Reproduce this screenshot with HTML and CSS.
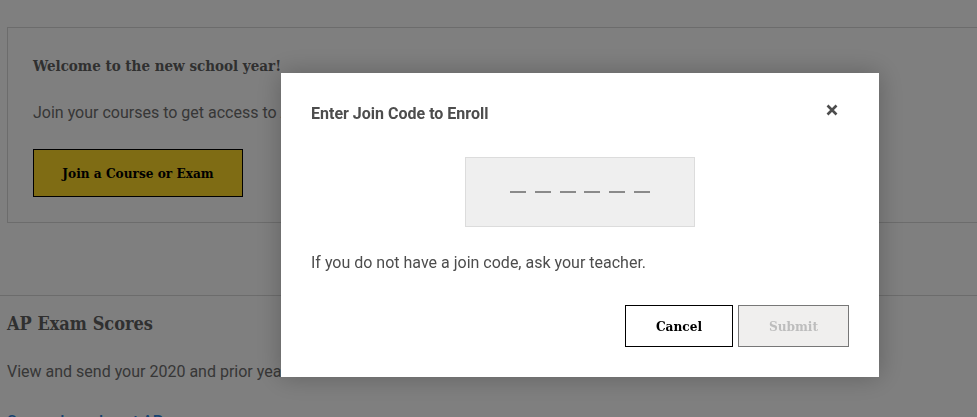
FILE: index.html
```html
<!DOCTYPE html>
<html lang="en">
<head>
  <meta charset="UTF-8" />
  <meta name="viewport" content="width=device-width, initial-scale=1.0"/>
  <title>My AP</title>
  <link rel="stylesheet" href="styles.css">
</head>
<body>
  <div class="page">
    <div class="welcome">
      <h3>Welcome to the new school year!</h3>
      <p>Join your courses to get access to AP Classroom resources and register for AP Exams.</p>
      <button class="btn-yellow">Join a Course or Exam</button>
    </div>

    <div class="scores">
      <h2>AP Exam Scores</h2>
      <p>View and send your 2020 and prior years' AP Exam scores.</p>
      <a href="#" class="link">See and send past AP exam scores &gt;</a>
    </div>
  </div>

  <div class="overlay"></div>

  <div class="modal">
    <div class="modal-head">
      <h4>Enter Join Code to Enroll</h4>
      <button class="close" aria-label="Close">
        <svg width="12" height="12" viewBox="0 0 12 12"><path d="M1.5 1.5 L10.5 10.5 M10.5 1.5 L1.5 10.5" stroke="#4d4d4d" stroke-width="2.6"/></svg>
      </button>
    </div>
    <div class="code-box">
      <span class="dash"></span><span class="dash"></span><span class="dash"></span><span class="dash"></span><span class="dash"></span><span class="dash"></span>
    </div>
    <p class="hint">If you do not have a join code, ask your teacher.</p>
    <div class="actions">
      <button class="btn-cancel">Cancel</button>
      <button class="btn-submit" disabled>Submit</button>
    </div>
  </div>
</body>
</html>
```

FILE: styles.css
```css
body { margin: 0; font-family: Roboto, Arial, sans-serif; color: #6e6e6e; background: #fff; overflow: hidden; height: 417px; }
.page { padding-top: 27px; }

.welcome { margin-left: 7px; margin-right: -20px; border: 1px solid #d9d9d9; padding: 27px 25px 0; height: 196px; box-sizing: border-box; }
.welcome h3 { margin: 0; font-family: "DejaVu Serif Condensed", "DejaVu Serif", serif; font-size: 15px; font-weight: bold; color: #606060; line-height: 22px; }
.welcome p { margin: 25px 0 0; font-size: 16px; line-height: 22px; white-space: nowrap; }
.btn-yellow { display: block; margin-top: 25px; width: 210px; height: 48px; background: #fed828; border: 1px solid #000; font-family: "DejaVu Serif Condensed", "DejaVu Serif", serif; font-weight: bold; font-size: 13.5px; color: #000; }

.scores { margin-top: 72px; border-top: 1px solid #d9d9d9; padding: 15px 7px 0; }
.scores h2 { margin: 0; font-family: "DejaVu Serif Condensed", "DejaVu Serif", serif; font-size: 18px; font-weight: bold; line-height: 26px; color: #606060; }
.scores p { margin: 24px 0 0; font-size: 16px; line-height: 22px; white-space: nowrap; }
.link { display: inline-block; margin-top: 29px; color: #2f86e0; font-size: 16px; font-weight: 500; text-decoration: underline; }

.overlay { position: fixed; inset: 0; background: rgba(0, 0, 0, 0.5); }

.modal { position: fixed; left: 281px; top: 73px; width: 598px; height: 304px; box-sizing: border-box; background: #fff; padding: 29px 30px 30px; box-shadow: 0 0 24px rgba(0, 0, 0, 0.25); }
.modal-head { display: flex; justify-content: space-between; align-items: flex-start; }
.modal-head h4 { margin: 0; font-size: 16px; font-weight: bold; line-height: 24px; color: #4d4d4d; }
.close { background: none; border: none; padding: 0; margin: 2px 11px 0 0; width: 12px; height: 12px; line-height: 0; }

.code-box { width: 230px; height: 70px; box-sizing: border-box; margin: 31px auto 0; background: #efefef; border: 1px solid #dcdcdc; display: flex; justify-content: center; align-items: center; gap: 8.7px; }
.dash { width: 16px; height: 2px; background: #8a8a8a; }

.hint { margin: 24px 0 0; font-size: 16px; line-height: 24px; color: #4d4d4d; }

.actions { display: flex; justify-content: flex-end; gap: 5px; margin-top: 30px; }
.actions button { height: 42px; font-family: "DejaVu Serif Condensed", "DejaVu Serif", serif; font-weight: bold; font-size: 13.5px; }
.btn-cancel { width: 108px; background: #fff; border: 1px solid #000; color: #000; }
.btn-submit { width: 111px; background: #f0efee; border: 1px solid #777; color: #bdbdbd; }
```
